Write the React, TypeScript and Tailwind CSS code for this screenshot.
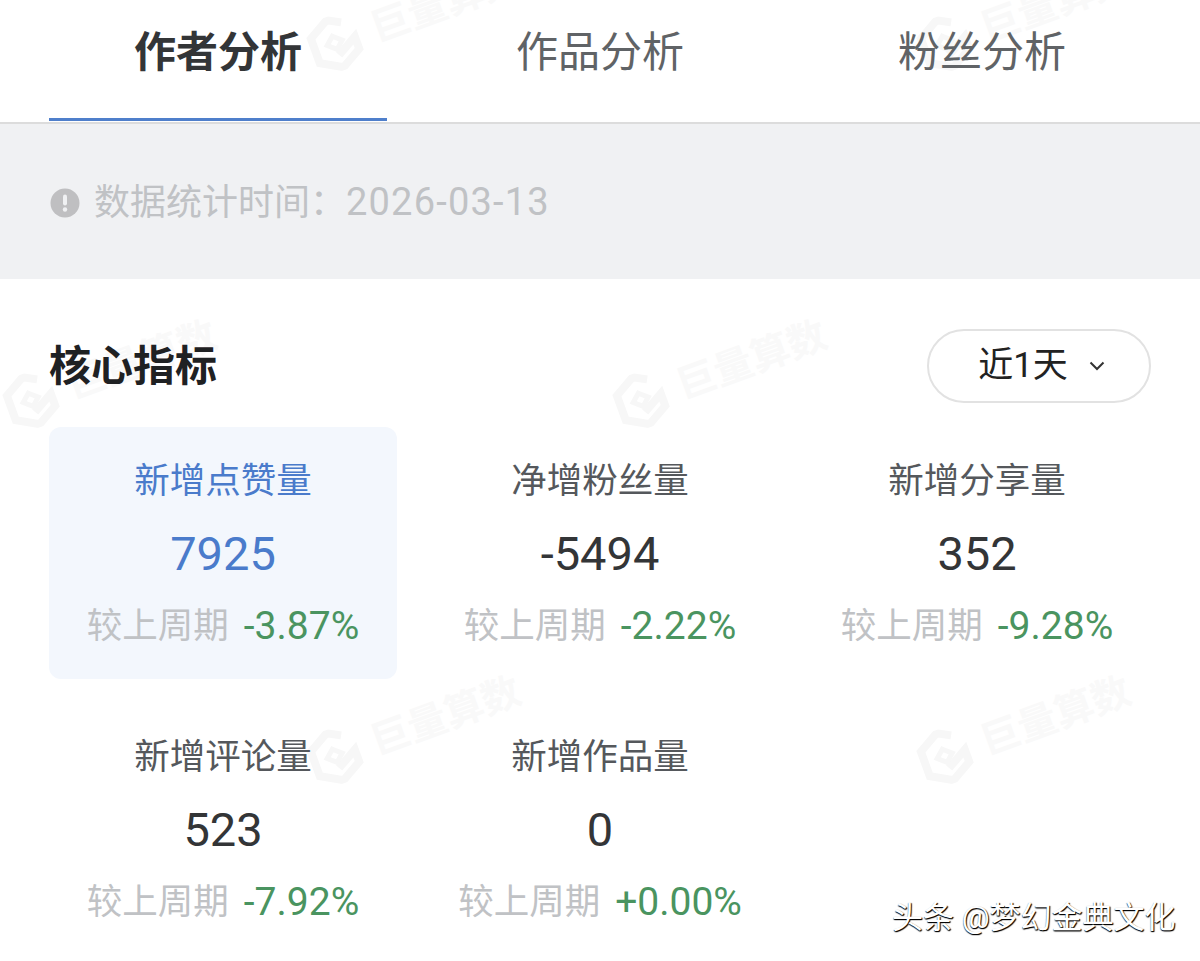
const metrics = [
  { label: "新增点赞量", value: "7925", change: "-3.87%", active: true },
  { label: "净增粉丝量", value: "-5494", change: "-2.22%" },
  { label: "新增分享量", value: "352", change: "-9.28%" },
  { label: "新增评论量", value: "523", change: "-7.92%" },
  { label: "新增作品量", value: "0", change: "+0.00%" },
];

function Watermark({ className }: { className: string }) {
  return (
    <div className={`absolute flex items-center gap-[12px] -rotate-[20deg] text-[39px] font-bold leading-none text-[#f9f9f9] pointer-events-none ${className}`}>
      <svg width="56" height="56" viewBox="0 0 56 56" fill="none" className="shrink-0">
        <path d="M41 10 28 3 7 15v26l21 12 21-12V28L28 40" stroke="#f7f7f7" strokeWidth="8" />
        <path d="M28 20l8 7-8 7-8-7z" stroke="#f7f7f7" strokeWidth="5" />
      </svg>
      <span>巨量算数</span>
    </div>
  );
}

function Metric({ label, value, change, active }: { label: string; value: string; change: string; active?: boolean }) {
  return (
    <div className={`flex h-[252px] flex-col items-center rounded-[12px] pt-[31px] ${active ? "bg-[#f3f7fd]" : ""}`}>
      <div className={`text-[35.5px] leading-[46px] ${active ? "text-[#4a7bcb]" : "text-[#55585c]"}`}>{label}</div>
      <div className={`mt-[22px] text-[47px] leading-[56px] ${active ? "text-[#4a7bcb]" : "text-[#333537]"}`}>{value}</div>
      <div className="mt-[21px] flex items-center gap-[15px] leading-[46px]">
        <span className="text-[35.5px] text-[#c0c2c5]">较上周期</span>
        <span className="text-[39px] text-[#4a9460]">{change}</span>
      </div>
    </div>
  );
}

export default function App() {
  return (
    <div className="relative h-[961px] w-[1200px] overflow-hidden bg-white font-['Roboto','Noto_Sans_CJK_SC',sans-serif]">
      {/* Watermarks sit under the content */}
      <Watermark className="left-[302px] top-[-13px]" />
      <Watermark className="left-[912px] top-[-13px]" />
      <Watermark className="left-[-2px] top-[344px]" />
      <Watermark className="left-[608px] top-[344px]" />
      <Watermark className="left-[302px] top-[700px]" />
      <Watermark className="left-[912px] top-[700px]" />

      <div className="relative z-10">
        {/* Tabs */}
        <div className="flex h-[124px] border-b-2 border-[#dcdcdc] px-[27px]">
          <div className="flex flex-1 justify-center">
            <div className="h-[121px] w-[338px] border-b-[3px] border-[#4f7fcb] pt-[22px] text-center text-[42px] font-bold leading-[62px] text-[#333537]">作者分析</div>
          </div>
          <div className="flex-1 pt-[22px] text-center text-[42px] leading-[62px] text-[#606366]">作品分析</div>
          <div className="flex-1 pt-[22px] text-center text-[42px] leading-[62px] text-[#606366]">粉丝分析</div>
        </div>

        {/* Notice */}
        <div className="flex h-[155px] items-center bg-[#f0f1f3] px-[50px] pt-[2px] text-[36px] text-[#c0c2c5]">
          <svg width="30" height="30" viewBox="0 0 30 30">
            <circle cx="15" cy="15" r="14.5" fill="#bfbfc1" />
            <rect x="13" y="6.5" width="4" height="11" rx="2" fill="#f0f1f3" />
            <circle cx="15" cy="21.5" r="2.2" fill="#f0f1f3" />
          </svg>
          <span className="ml-[14px] w-[252px]">数据统计时间：</span>
          <span className="text-[38px] tracking-[1.2px]">2026-03-13</span>
        </div>

        {/* Core metrics */}
        <div className="flex items-center justify-between px-[49px] pt-[50px]">
          <h2 className="pt-[2px] text-[42px] font-bold leading-[72px] text-[#1f2123]">核心指标</h2>
          <div className="flex h-[74px] w-[224px] items-center justify-center gap-[20px] rounded-full border-2 border-[#e2e2e2] pl-[6px] text-[35px] text-[#222]">
            <span>近1天</span>
            <svg width="18" height="12" viewBox="0 0 18 12" fill="none">
              <path d="M2.5 2.5 9 9l6.5-6.5" stroke="#333" strokeWidth="2" />
            </svg>
          </div>
        </div>
        <div className="mt-[24px] grid grid-cols-3 gap-x-[29px] gap-y-[24px] px-[49px]">
          {metrics.map((m) => (
            <Metric key={m.label} {...m} />
          ))}
        </div>
      </div>

      {/* Footer mark */}
      <div className="absolute left-[892px] top-[898px] z-20 text-[31px] leading-[40px] text-white [text-shadow:1px_1px_1px_#000,0_1px_1px_#222]">头条 @梦幻金典文化</div>
    </div>
  );
}
